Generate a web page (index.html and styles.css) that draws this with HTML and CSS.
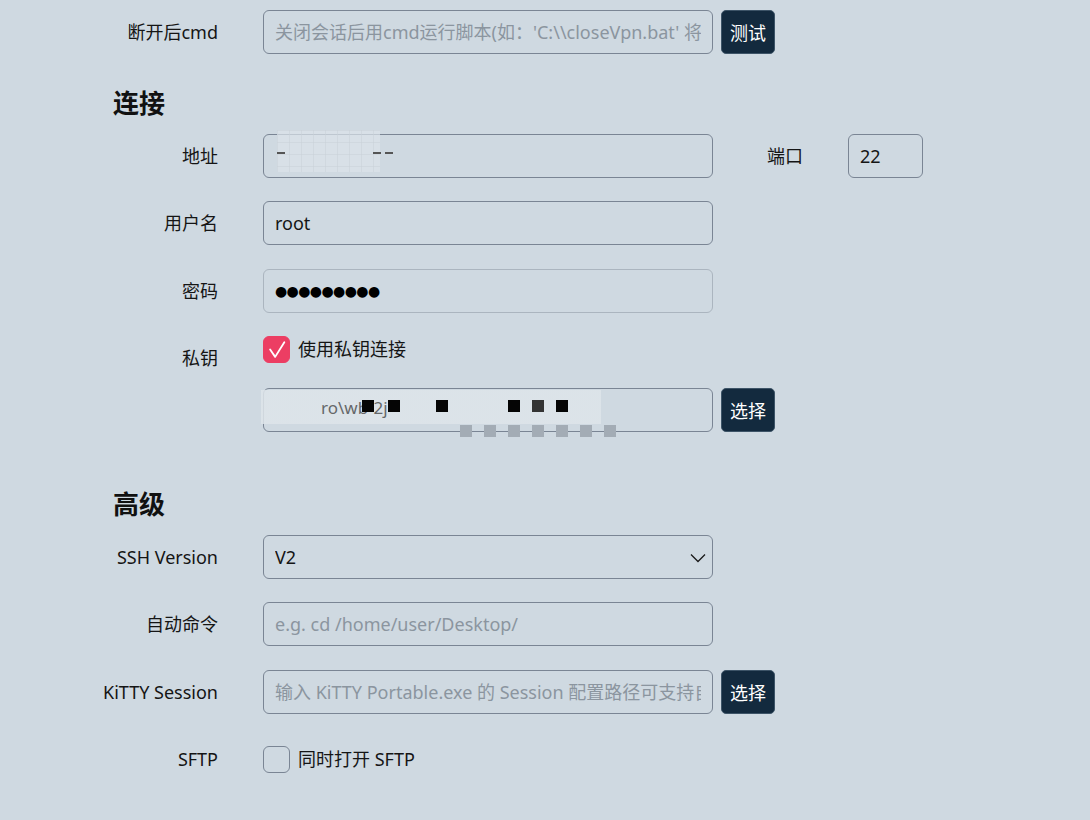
FILE: index.html
```html
<!DOCTYPE html>
<html lang="zh-CN">
<head>
<meta charset="utf-8">
<title>SSH 设置</title>
<link rel="stylesheet" href="styles.css">
</head>
<body>
<div class="form">
  <div class="rows">
    <div class="row">
      <label class="lbl">断开后cmd</label>
      <input class="field" type="text" placeholder="关闭会话后用cmd运行脚本(如：'C:\\closeVpn.bat' 将在断开后执行)">
      <button class="btn">测试</button>
    </div>
  </div>

  <h2 class="section-title first">连接</h2>
  <div class="rows">
    <div class="row">
      <label class="lbl">地址</label>
      <div class="masked">
        <input class="field" type="text" value="">
        <span class="blur blur-addr">
          <span class="dash" style="left:0;top:22px"></span>
          <span class="dash" style="left:96px;top:22px"></span>
          <span class="dash" style="left:108px;top:22px"></span>
        </span>
      </div>
      <label class="lbl-port">端口</label>
      <input class="field port" type="text" value="22">
    </div>
    <div class="row">
      <label class="lbl">用户名</label>
      <input class="field" type="text" value="root">
    </div>
    <div class="row">
      <label class="lbl">密码</label>
      <input class="field soft dots" type="text" value="●●●●●●●●●" readonly>
    </div>
    <div class="row top">
      <label class="lbl">私钥</label>
      <div class="stack">
        <label class="check-line">
          <span class="box checked">
            <svg viewBox="0 0 24 24" width="22" height="22"><path d="M4.5 11.5 L10 19.5 L20 3.5" fill="none" stroke="#fff" stroke-width="2" stroke-linecap="round" stroke-linejoin="round"/></svg>
          </span>
          <span class="check-text">使用私钥连接</span>
        </label>
        <div class="inline">
          <div class="masked">
            <input class="field" type="text" value="">
            <span class="blur blur-key">
              <span class="key-text">ro\wb-2j</span>
              <span class="sq d" style="left:101px"></span>
              <span class="sq d" style="left:127px"></span>
              <span class="sq d" style="left:175px"></span>
              <span class="sq d" style="left:247px"></span>
              <span class="sq m" style="left:271px"></span>
              <span class="sq d" style="left:295px"></span>
              <span class="sq g" style="left:199px"></span>
              <span class="sq g" style="left:223px"></span>
              <span class="sq g" style="left:247px"></span>
              <span class="sq g" style="left:271px"></span>
              <span class="sq g" style="left:295px"></span>
              <span class="sq g" style="left:319px"></span>
              <span class="sq g" style="left:343px"></span>
            </span>
          </div>
          <button class="btn">选择</button>
        </div>
      </div>
    </div>
  </div>

  <h2 class="section-title second">高级</h2>
  <div class="rows">
    <div class="row">
      <label class="lbl">SSH Version</label>
      <div class="select-wrap">
        <select class="field select">
          <option>V2</option>
          <option>V1</option>
        </select>
        <svg class="chev" viewBox="0 0 16 10" width="16" height="10"><path d="M1 1.5 L8 8.5 L15 1.5" fill="none" stroke="#1a1a1a" stroke-width="1.3"/></svg>
      </div>
    </div>
    <div class="row">
      <label class="lbl">自动命令</label>
      <input class="field" type="text" placeholder="e.g. cd /home/user/Desktop/">
    </div>
    <div class="row">
      <label class="lbl">KiTTY Session</label>
      <input class="field" type="text" placeholder="输入 KiTTY Portable.exe 的 Session 配置路径可支持自动登录">
      <button class="btn">选择</button>
    </div>
    <div class="row">
      <label class="lbl">SFTP</label>
      <label class="check-line center">
        <span class="box"></span>
        <span class="check-text">同时打开 SFTP</span>
      </label>
    </div>
  </div>
</div>
</body>
</html>
```

FILE: styles.css
```css
* { box-sizing: border-box; }

html, body {
  margin: 0;
  padding: 0;
  background: #cfd9e1;
}

body {
  font-family: "Noto Sans", "Noto Sans CJK SC", sans-serif;
  font-size: 18px;
  color: #151515;
  height: 820px;
  overflow: hidden;
}

.form {
  padding: 10px 0 0 96px;
}

.rows {
  display: flex;
  flex-direction: column;
  gap: 23.5px;
}

.row {
  display: flex;
  align-items: center;
}

.row.top {
  align-items: flex-start;
}

.lbl {
  width: 122px;
  flex: none;
  margin-right: 45px;
  text-align: right;
  line-height: 44px;
  height: 44px;
  white-space: nowrap;
}

.lbl-port {
  margin-left: 54px;
  margin-right: 45px;
  line-height: 44px;
}

.field {
  width: 450px;
  height: 44px;
  flex: none;
  border: 1.5px solid #7a8594;
  border-radius: 6px;
  background: transparent;
  padding: 0 11px;
  font-family: "Noto Sans", "Noto Sans CJK SC", sans-serif;
  font-size: 18px;
  color: #151515;
  outline: none;
}

.field::placeholder {
  color: #8b959f;
}

.field.port {
  width: 75px;
}

.field.soft {
  border-color: #abb5bf;
}

.field.dots {
  font-family: "DejaVu Sans", sans-serif;
  font-size: 14px;
  letter-spacing: -0.6px;
  color: #000;
}

.btn {
  margin-left: 8px;
  width: 54px;
  height: 44px;
  flex: none;
  border: 1.5px solid #3d5467;
  border-radius: 5px;
  background: #132a3e;
  color: #ffffff;
  font-family: "Noto Sans CJK SC", sans-serif;
  font-size: 18px;
  padding: 0;
}

.section-title {
  margin: 0 0 13.5px 17px;
  font-family: "Noto Sans CJK SC", sans-serif;
  font-size: 26px;
  font-weight: 700;
  line-height: 36px;
  height: 36px;
  color: #111;
}

.section-title.first { margin-top: 30px; }
.section-title.second { margin-top: 53px; }

.stack {
  display: flex;
  flex-direction: column;
  gap: 8px;
}

.inline {
  display: flex;
  align-items: center;
}

.check-line {
  display: flex;
  align-items: flex-start;
  height: 44px;
  gap: 8px;
}

.check-line.center {
  align-items: center;
}

.box {
  width: 27px;
  height: 27px;
  flex: none;
  border: 1.5px solid #7a8594;
  border-radius: 6px;
  display: flex;
  align-items: center;
  justify-content: center;
}

.box.checked {
  background: #ec3e63;
  border-color: #ec3e63;
}

.check-text {
  line-height: 27px;
}

.select-wrap {
  position: relative;
  display: flex;
}

.select {
  appearance: none;
  -webkit-appearance: none;
  padding-right: 40px;
}

.chev {
  position: absolute;
  right: 7px;
  top: 18px;
  pointer-events: none;
}

.masked {
  position: relative;
  display: flex;
}

.blur {
  position: absolute;
  pointer-events: none;
}

.blur-addr {
  left: 14px;
  top: -4px;
  width: 103px;
  height: 42px;
  background:
    repeating-linear-gradient(to right, rgba(200,208,215,0.5) 0 1px, transparent 1px 12px),
    repeating-linear-gradient(to bottom, rgba(200,208,215,0.5) 0 1px, transparent 1px 12px),
    rgba(220, 227, 233, 0.7);
}

.dash {
  position: absolute;
  width: 8px;
  height: 2px;
  background: #555;
}

.blur-key {
  left: -2px;
  top: 2px;
  width: 340px;
  height: 48px;
  background:
    linear-gradient(to bottom, rgba(222,229,234,0.85) 0, rgba(222,229,234,0.85) 34px, transparent 34px);
}

.key-text {
  position: absolute;
  left: 60px;
  top: 6px;
  font-size: 17px;
  color: #333;
  opacity: 0.7;
}

.sq {
  position: absolute;
  width: 12px;
  height: 12px;
}

.sq.d { top: 10px; background: #050505; }
.sq.m { top: 10px; background: #333; }
.sq.g { top: 35px; background: #a3acb5; }
```
